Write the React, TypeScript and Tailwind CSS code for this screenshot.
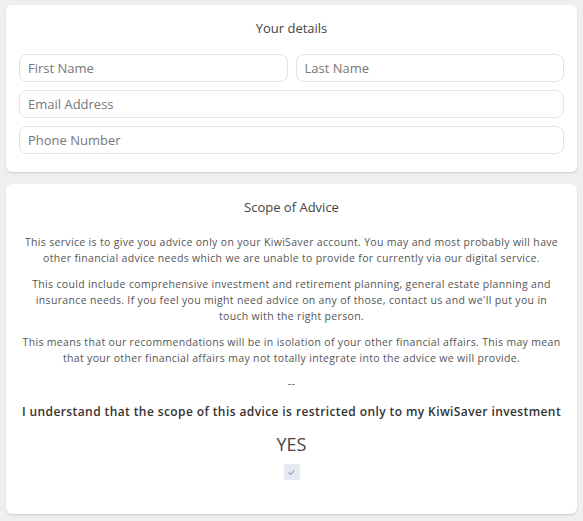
import React from "react";

const font = { fontFamily: '"Open Sans", "Noto Sans", sans-serif' };

function Field({ placeholder, className = "" }: { placeholder: string; className?: string }) {
  return (
    <input
      placeholder={placeholder}
      className={`h-[28px] w-full rounded-[8px] border border-[#dde4ee] bg-white px-[8px] text-[13px] text-[#555] placeholder:text-[#777] outline-none ${className}`}
      style={font}
    />
  );
}

export default function App() {
  return (
    <div className="min-h-[521px] w-[583px] bg-[#efefef] px-[6px] pt-[5px] pb-[7px]" style={font}>
      <div className="rounded-[6px] bg-white px-[13px] pt-[15px] pb-[18px] shadow-[0_1px_2px_rgba(0,0,0,0.15)]">
        <h2 className="text-center text-[13px] leading-[16px] text-[#444]">Your details</h2>
        <div className="mt-[18px] flex flex-col gap-[8px]">
          <div className="flex gap-[8px]">
            <Field placeholder="First Name" />
            <Field placeholder="Last Name" />
          </div>
          <Field placeholder="Email Address" />
          <Field placeholder="Phone Number" />
        </div>
      </div>

      <div className="mt-[12px] h-[330px] rounded-[6px] bg-white px-[13px] pt-[15px] shadow-[0_1px_2px_rgba(0,0,0,0.15)]">
        <h2 className="text-center text-[13px] leading-[16px] text-[#444]">Scope of Advice</h2>
        <div className="mt-[19px] flex flex-col gap-[10px] text-center text-[10.5px] leading-[16px] tracking-[0.33px] text-[#555]">
          <p>
            This service is to give you advice only on your KiwiSaver account. You may and most probably will have
            <br />
            other financial advice needs which we are unable to provide for currently via our digital service.
          </p>
          <p>
            This could include comprehensive investment and retirement planning, general estate planning and
            <br />
            insurance needs. If you feel you might need advice on any of those, contact us and we'll put you in
            <br />
            touch with the right person.
          </p>
          <p>
            This means that our recommendations will be in isolation of your other financial affairs. This may mean
            <br />
            that your other financial affairs may not totally integrate into the advice we will provide.
          </p>
          <p className="-mt-[1px]">--</p>
        </div>
        <p className="mt-[12px] whitespace-nowrap text-center text-[12px] font-semibold leading-[18px] tracking-[0.4px] text-[#333]">
          I understand that the scope of this advice is restricted only to my KiwiSaver investment
        </p>
        <p className="mt-[12px] text-center text-[18px] leading-[22px] text-[#444]">YES</p>
        <div className="mt-[9px] flex justify-center">
          <div className="flex h-[16px] w-[16px] items-center justify-center rounded-[3px] bg-[#e4e8f1]">
            <svg width="9" height="9" viewBox="0 0 10 10" fill="none">
              <path d="M2 5.2 L4.2 7.2 L8 3" stroke="#9aa3b2" strokeWidth="1.2" strokeLinecap="round" strokeLinejoin="round" />
            </svg>
          </div>
        </div>
      </div>
    </div>
  );
}
